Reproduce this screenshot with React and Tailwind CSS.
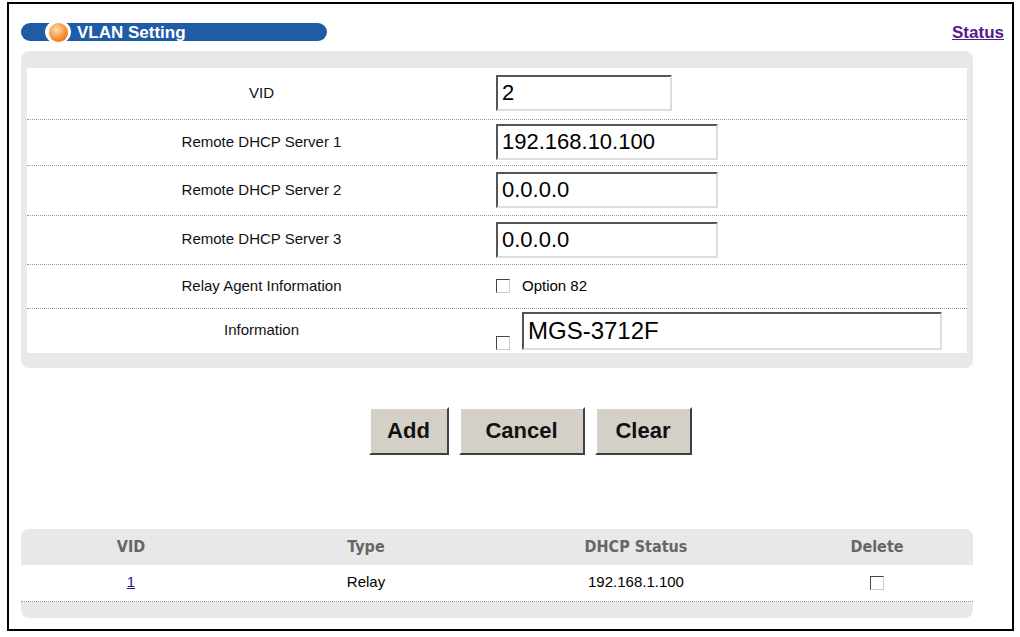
export default function App() {
  const inp = 'h-[36px] border-2 border-t-[#555] border-l-[#555] border-b-[#ddd] border-r-[#ddd] px-1 text-[22px] bg-white outline-none';
  const rows = [
    { label: 'VID', h: 'h-[52px]', field: <input readOnly value="2" className={`w-[176px] ${inp}`} /> },
    { label: 'Remote DHCP Server 1', h: 'h-[46px]', field: <input readOnly value="192.168.10.100" className={`w-[222px] ${inp}`} /> },
    { label: 'Remote DHCP Server 2', h: 'h-[50px]', field: <input readOnly value="0.0.0.0" className={`w-[222px] ${inp}`} /> },
    { label: 'Remote DHCP Server 3', h: 'h-[49px]', field: <input readOnly value="0.0.0.0" className={`w-[222px] ${inp}`} /> },
    { label: 'Relay Agent Information', h: 'h-[44px]', field: <div className="flex items-center gap-3"><Box /><span className="text-[15px]">Option 82</span></div> },
    { label: 'Information', h: 'h-[44px]', field: <div className="flex items-end gap-3"><Box /><input readOnly value="MGS-3712F" className="w-[420px] h-[38px] border-2 border-t-[#555] border-l-[#555] border-b-[#ddd] border-r-[#ddd] px-1 text-[24px] bg-white outline-none" /></div> },
  ];
  return (
    <div className="w-[1020px] h-[637px] bg-white pt-[2px] pl-[7px]" style={{ fontFamily: '"Liberation Sans", Arial, sans-serif' }}>
      <div className="w-[1007px] h-[629px] border-2 border-black pl-[12px] pr-[8px] pt-[16px]">
        <div className="flex items-start justify-between">
          <div className="w-[306px] h-[18px] rounded-full bg-[#1f5ba6] flex items-center pl-[24px] mt-[3px]">
            <div className="w-[26px] h-[22px] rounded-full bg-white flex items-center justify-center">
              <div className="w-[19px] h-[19px] rounded-full bg-[radial-gradient(circle_at_40%_35%,#ffe0b0,#f58a2a_60%,#d45a10)]" />
            </div>
            <span className="ml-[6px] text-white font-bold text-[17px] leading-none">VLAN Setting</span>
          </div>
          <a className="text-[#551a8b] underline font-bold text-[17px]">Status</a>
        </div>
        <div className="w-[952px] mt-[5px] bg-[#e8e8e8] rounded-[8px] px-[6px] pt-[17px] pb-[15px]">
          <div className="bg-white">
            {rows.map((r, i) => (
              <div key={i} className={`flex items-center ${r.h} ${i < rows.length - 1 ? 'border-b border-dotted border-[#999]' : ''}`}>
                <div className="w-[469px] text-center text-[15px] text-[#111]">{r.label}</div>
                <div>{r.field}</div>
              </div>
            ))}
          </div>
        </div>
        <div className="flex justify-center gap-[10px] mt-[39px] ml-[33px] w-[952px]">
          <Btn w="w-[80px]">Add</Btn>
          <Btn w="w-[126px]">Cancel</Btn>
          <Btn w="w-[97px]">Clear</Btn>
        </div>
        <div className="w-[952px] mt-[74px] bg-[#e8e8e8] rounded-[8px] pb-[16px]">
          <div className="grid grid-cols-[220px_250px_290px_192px] h-[36px] items-center text-[16px] font-bold text-[#666] text-center" style={{ fontFamily: '"DejaVu Sans Condensed", "Liberation Sans Narrow", sans-serif' }}>
            <div>VID</div><div>Type</div><div>DHCP Status</div><div>Delete</div>
          </div>
          <div className="grid grid-cols-[220px_250px_290px_192px] h-[37px] items-center bg-white text-[15px] text-center border-b border-dotted border-[#999]">
            <div><a className="text-[#1a1aa6] underline">1</a></div><div>Relay</div><div>192.168.1.100</div><div className="flex justify-center"><Box /></div>
          </div>
        </div>
      </div>
    </div>
  );
}

function Box() {
  return <div className="w-[14px] h-[14px] bg-white border border-t-[#444] border-l-[#444] border-b-[#ccc] border-r-[#ccc]" />;
}

function Btn({ w, children }) {
  return (
    <button className={`${w} h-[48px] bg-[#d4d0c8] border-2 border-t-white border-l-white border-b-[#404040] border-r-[#404040] font-bold text-[22px] text-[#111]`}>
      {children}
    </button>
  );
}
